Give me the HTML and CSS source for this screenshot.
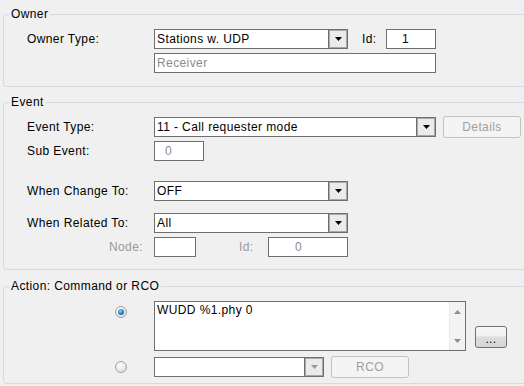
FILE: index.html
```html
<!DOCTYPE html>
<html lang="en">
<head>
  <meta charset="UTF-8">
  <title>Event Setup</title>
  <link rel="stylesheet" href="styles.css">
</head>
<body>

  <fieldset class="group owner">
    <legend>Owner</legend>
    <div class="row">
      <span class="lbl">Owner Type:</span>
      <div class="combo w194">
        <span class="val">Stations w. UDP</span>
        <span class="drop"><svg width="7" height="4"><path d="M0 0h7L3.5 4z"/></svg></span>
      </div>
      <span class="lbl-id">Id:</span>
      <div class="box id-box">1</div>
    </div>
    <div class="row gap4">
      <span class="lbl"></span>
      <div class="box receiver">Receiver</div>
    </div>
  </fieldset>

  <fieldset class="group event">
    <legend>Event</legend>
    <div class="row">
      <span class="lbl">Event Type:</span>
      <div class="combo w282">
        <span class="val">11 - Call requester mode</span>
        <span class="drop"><svg width="7" height="4"><path d="M0 0h7L3.5 4z"/></svg></span>
      </div>
      <button class="btn off details">Details</button>
    </div>
    <div class="row gap4">
      <span class="lbl">Sub Event:</span>
      <div class="box sub-box">0</div>
    </div>
    <div class="row gap20">
      <span class="lbl">When Change To:</span>
      <div class="combo w194">
        <span class="val">OFF</span>
        <span class="drop"><svg width="7" height="4"><path d="M0 0h7L3.5 4z"/></svg></span>
      </div>
    </div>
    <div class="row gap12">
      <span class="lbl">When Related To:</span>
      <div class="combo w194">
        <span class="val">All</span>
        <span class="drop"><svg width="7" height="4"><path d="M0 0h7L3.5 4z"/></svg></span>
      </div>
    </div>
    <div class="row gap4">
      <span class="lbl dim right">Node:</span>
      <div class="box node-box"></div>
      <span class="lbl-id dim node-id">Id:</span>
      <div class="box nid-box">0</div>
    </div>
  </fieldset>

  <fieldset class="group action">
    <legend>Action: Command or RCO</legend>
    <div class="row top">
      <span class="lbl"><span class="radio on"></span></span>
      <div class="memo">
        <div class="memo-text">WUDD %1.phy 0</div>
        <div class="vscroll">
          <svg width="7" height="4"><path d="M0 4h7L3.5 0z"/></svg>
          <svg width="7" height="4"><path d="M0 0h7L3.5 4z"/></svg>
        </div>
      </div>
      <button class="btn more">...</button>
    </div>
    <div class="row gap6">
      <span class="lbl"><span class="radio"></span></span>
      <div class="combo w170 disabled">
        <span class="val"></span>
        <span class="drop"><svg width="7" height="4"><path d="M0 0h7L3.5 4z"/></svg></span>
      </div>
      <button class="btn off rco">RCO</button>
    </div>
  </fieldset>

</body>
</html>
```

FILE: styles.css
```css
html, body {
  margin: 0;
  height: 100%;
  overflow: hidden;
}

body {
  font-family: 'Liberation Sans', Arial, sans-serif;
  font-size: 12px;
  letter-spacing: 0.4px;
  color: #000;
  background: #f0f0f0;
  padding-top: 8px;
  box-sizing: border-box;
}

.group {
  margin: 0 -10px 0 3px;
  padding: 8px 0 0 23px;
  border: 1px solid #d3dce3;
  border-radius: 3px;
}

.group legend {
  line-height: 13px;
  padding: 0 2px;
  margin-left: -18px;
}

.owner { padding-bottom: 13px; }
.event { margin-top: 9px; padding-bottom: 12px; }
.action { margin-top: 10px; padding-bottom: 6px; }

.row {
  display: flex;
  align-items: center;
  height: 20px;
}

.row.top {
  align-items: flex-start;
  height: 50px;
}

.gap4 { margin-top: 4px; }
.gap6 { margin-top: 6px; }
.gap12 { margin-top: 12px; }
.gap20 { margin-top: 20px; }

.lbl {
  width: 127px;
  flex: none;
}

.lbl.right {
  text-align: right;
  padding-right: 11px;
  box-sizing: border-box;
}

.dim { color: #9a9a9a; }

.lbl-id {
  margin-left: 14px;
  width: 24px;
}

.node-id {
  margin-left: 43px;
  width: 29px;
}

/* text boxes */
.box {
  height: 20px;
  box-sizing: border-box;
  border: 1px solid #6f6f6f;
  background: #fff;
  line-height: 18px;
  white-space: nowrap;
}

.id-box { width: 50px; padding-left: 15px; }
.receiver { width: 282px; padding-left: 2px; color: #8c8c8c; }
.sub-box { width: 50px; padding-left: 10px; color: #8c8c8c; }
.node-box { width: 42px; }
.nid-box { width: 80px; padding-left: 26px; color: #8c8c8c; }

/* combo boxes */
.combo {
  display: flex;
  height: 20px;
  box-sizing: border-box;
  border: 1px solid #6f6f6f;
  background: #fff;
}

.w194 { width: 194px; }
.w282 { width: 282px; }
.w170 { width: 170px; }

.combo .val {
  flex: 1;
  padding-left: 2px;
  line-height: 18px;
  white-space: nowrap;
  overflow: hidden;
}

.combo .drop {
  width: 18px;
  display: flex;
  align-items: center;
  justify-content: center;
  border-left: 1px solid #6f6f6f;
  background: #ebebeb;
  box-shadow: inset 0 0 0 1px #a8a8a8;
}

.combo.disabled .drop path { fill: #9a9a9a; }

/* buttons */
.btn {
  font: inherit;
  letter-spacing: inherit;
  height: 22px;
  padding: 0;
  border-radius: 3px;
  flex: none;
}

.btn.off {
  color: #a0a0a0;
  background: #f4f4f4;
  border: 1px solid #c2c2c2;
}

.details { width: 78px; margin-left: 7px; }
.rco { width: 78px; margin-left: 7px; }

.more {
  width: 32px;
  margin: 0 0 3px 9px;
  align-self: flex-end;
  border: 1px solid #707070;
  background: linear-gradient(#f7f7f7 0%, #f0f0f0 45%, #dddddd 50%, #d6d6d6 100%);
  line-height: 24px;
}

/* radios */
.radio {
  display: block;
  width: 12px;
  height: 12px;
  margin-left: 88px;
  box-sizing: border-box;
  border-radius: 50%;
  border: 1px solid #a3a3a3;
  background: radial-gradient(circle at 40% 35%, #ffffff 0%, #e6e6e6 60%, #cfcfcf 100%);
  position: relative;
}

.row.top .radio { margin-top: 5px; }

.radio.on::after {
  content: "";
  position: absolute;
  left: 2px;
  top: 2px;
  width: 6px;
  height: 6px;
  border-radius: 50%;
  background: radial-gradient(circle at 40% 35%, #7fd3ff 0%, #1a80c8 55%, #0b4f86 100%);
}

/* memo with scrollbar */
.memo {
  width: 312px;
  height: 50px;
  box-sizing: border-box;
  border: 1px solid #6f6f6f;
  background: #fff;
  display: flex;
}

.memo-text {
  flex: 1;
  padding: 2px 2px;
  line-height: 13px;
}

.vscroll {
  width: 16px;
  background: #f3f3f3;
  border-left: 1px solid #e8e8e8;
  display: flex;
  flex-direction: column;
  justify-content: space-between;
  align-items: center;
  padding: 8px 0 7px;
  box-sizing: border-box;
}

.vscroll path { fill: #8e8e8e; }
```
